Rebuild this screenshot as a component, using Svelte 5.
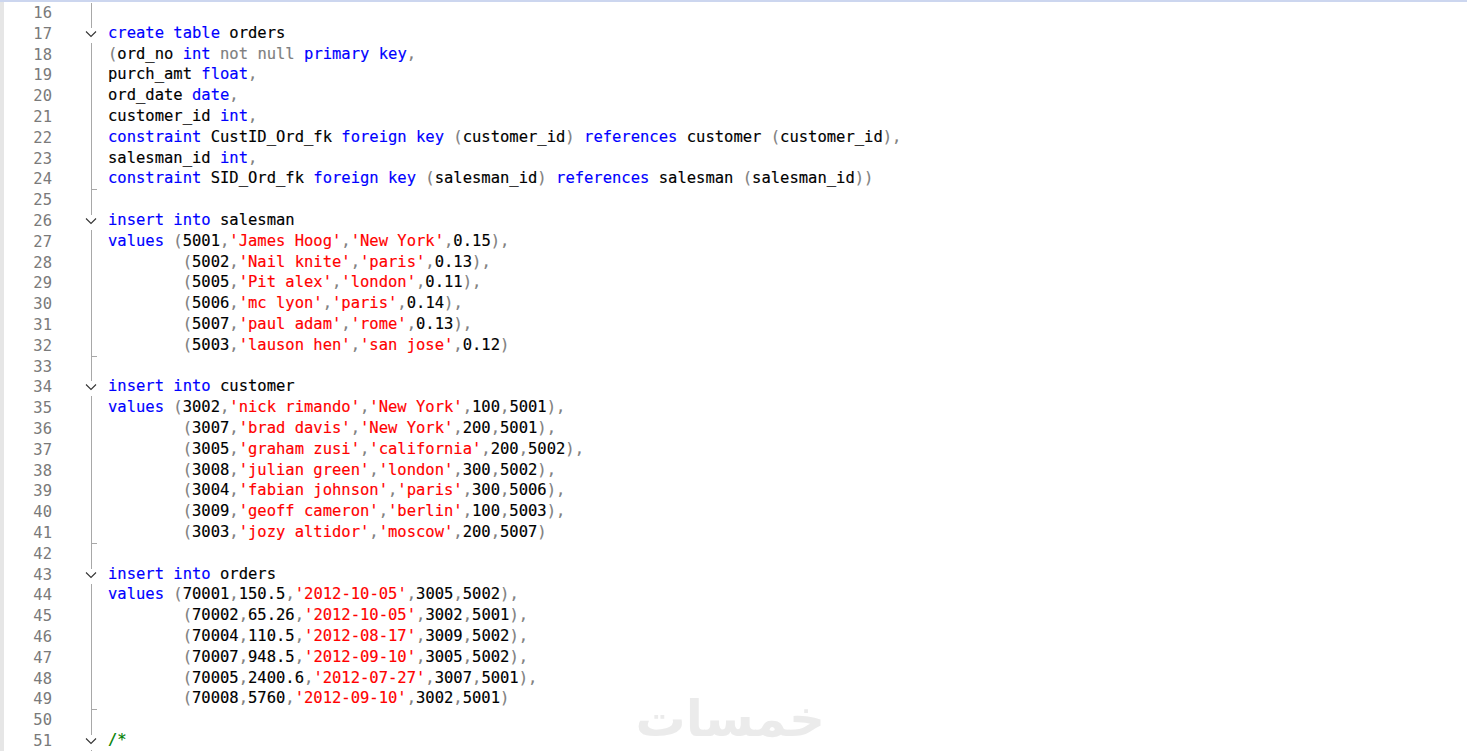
<script>
    const source = `
create table orders
(ord_no int not null primary key,
purch_amt float,
ord_date date,
customer_id int,
constraint CustID_Ord_fk foreign key (customer_id) references customer (customer_id),
salesman_id int,
constraint SID_Ord_fk foreign key (salesman_id) references salesman (salesman_id))

insert into salesman
values (5001,'James Hoog','New York',0.15),
        (5002,'Nail knite','paris',0.13),
        (5005,'Pit alex','london',0.11),
        (5006,'mc lyon','paris',0.14),
        (5007,'paul adam','rome',0.13),
        (5003,'lauson hen','san jose',0.12)

insert into customer
values (3002,'nick rimando','New York',100,5001),
        (3007,'brad davis','New York',200,5001),
        (3005,'graham zusi','california',200,5002),
        (3008,'julian green','london',300,5002),
        (3004,'fabian johnson','paris',300,5006),
        (3009,'geoff cameron','berlin',100,5003),
        (3003,'jozy altidor','moscow',200,5007)

insert into orders
values (70001,150.5,'2012-10-05',3005,5002),
        (70002,65.26,'2012-10-05',3002,5001),
        (70004,110.5,'2012-08-17',3009,5002),
        (70007,948.5,'2012-09-10',3005,5002),
        (70005,2400.6,'2012-07-27',3007,5001),
        (70008,5760,'2012-09-10',3002,5001)

/*`;

    const keywords = /^(create|table|int|primary|key|float|date|constraint|foreign|references|insert|into|values)$/;

    // split one line into coloured tokens, roughly what the SQL editor does
    const tokenize = (line) => {
        const parts = line.match(/'[^']*'|\/\*|\w+|\s+|./g) ?? [];
        return parts.map((text) => {
            let kind = "plain";
            if (text[0] === "'") kind = "str";
            else if (text === "/*") kind = "comment";
            else if (keywords.test(text)) kind = "kw";
            else if (text === "not" || text === "null" || /^[(),]$/.test(text)) kind = "muted";
            return { text, kind };
        });
    };

    const rows = source.split("\n").map((line, i) => {
        const number = i + 16;
        return {
            number,
            tokens: tokenize(line),
            open: [17, 26, 34, 43, 51].includes(number),
            end: [24, 32, 41, 49].includes(number),
        };
    });
</script>

<div class="editor">
    <div class="topbar"></div>
    <div class="body">
        <div class="margin"></div>
        <div class="lines">
            {#each rows as row}
                <div class="row">
                    <span class="num">{row.number}</span>
                    <span class="fold" class:open={row.open} class:end={row.end}>
                        {#if row.open}
                            <svg width="12" height="8" viewBox="0 0 12 8">
                                <path d="M1 1.5 L6 6.5 L11 1.5" fill="none" stroke="#333" stroke-width="1.1" />
                            </svg>
                        {/if}
                    </span>
                    <code class="code">{#each row.tokens as t}<span class={t.kind}>{t.text}</span>{/each}</code>
                </div>
            {/each}
        </div>
    </div>
    <div class="watermark" dir="rtl" lang="ar">خمسات</div>
</div>

<style>
    :global(body) {
        margin: 0;
        background: #fff;
        overflow: hidden;
    }
    .editor {
        position: relative;
        height: 751px;
        overflow: hidden;
        background: #fff;
    }
    .topbar {
        height: 2px;
        background: #ccd6ef;
    }
    .body {
        display: flex;
    }
    .margin {
        width: 4px;
        flex: none;
        background: #e6e6e6;
        height: 749px;
    }
    .lines {
        flex: 1;
        padding-top: 1px;
    }
    .row {
        display: flex;
        height: 20.8px;
        line-height: 20.8px;
        font-family: "DejaVu Sans Mono", "Liberation Mono", monospace;
        font-size: 15.5px;
        white-space: pre;
    }
    .num {
        width: 48px;
        flex: none;
        text-align: right;
        color: #7a7a7a;
    }
    .fold {
        position: relative;
        width: 56px;
        flex: none;
    }
    .fold::before {
        content: "";
        position: absolute;
        left: 39px;
        top: 0;
        bottom: 0;
        width: 1px;
        background: #a8a8a8;
    }
    .fold.open::before {
        background: linear-gradient(#a8a8a8 0 4px, transparent 4px 19px, #a8a8a8 19px);
    }
    .fold.end::after {
        content: "";
        position: absolute;
        left: 39px;
        bottom: 0;
        width: 6px;
        height: 1px;
        background: #a8a8a8;
    }
    .fold svg {
        position: absolute;
        left: 33px;
        top: 6px;
    }
    .code {
        font: inherit;
        margin-top: -1px;
        -webkit-text-stroke: 0.15px;
    }
    .plain { color: #000; }
    .kw { color: #0000ff; }
    .str { color: #ff0000; }
    .muted { color: #808080; }
    .comment { color: #008000; }
    .watermark {
        position: absolute;
        left: 640px;
        top: 684px;
        width: 185px;
        text-align: center;
        font-family: "DejaVu Sans", sans-serif;
        font-weight: bold;
        font-size: 50px;
        line-height: 70px;
        color: #ebebeb;
    }
</style>
